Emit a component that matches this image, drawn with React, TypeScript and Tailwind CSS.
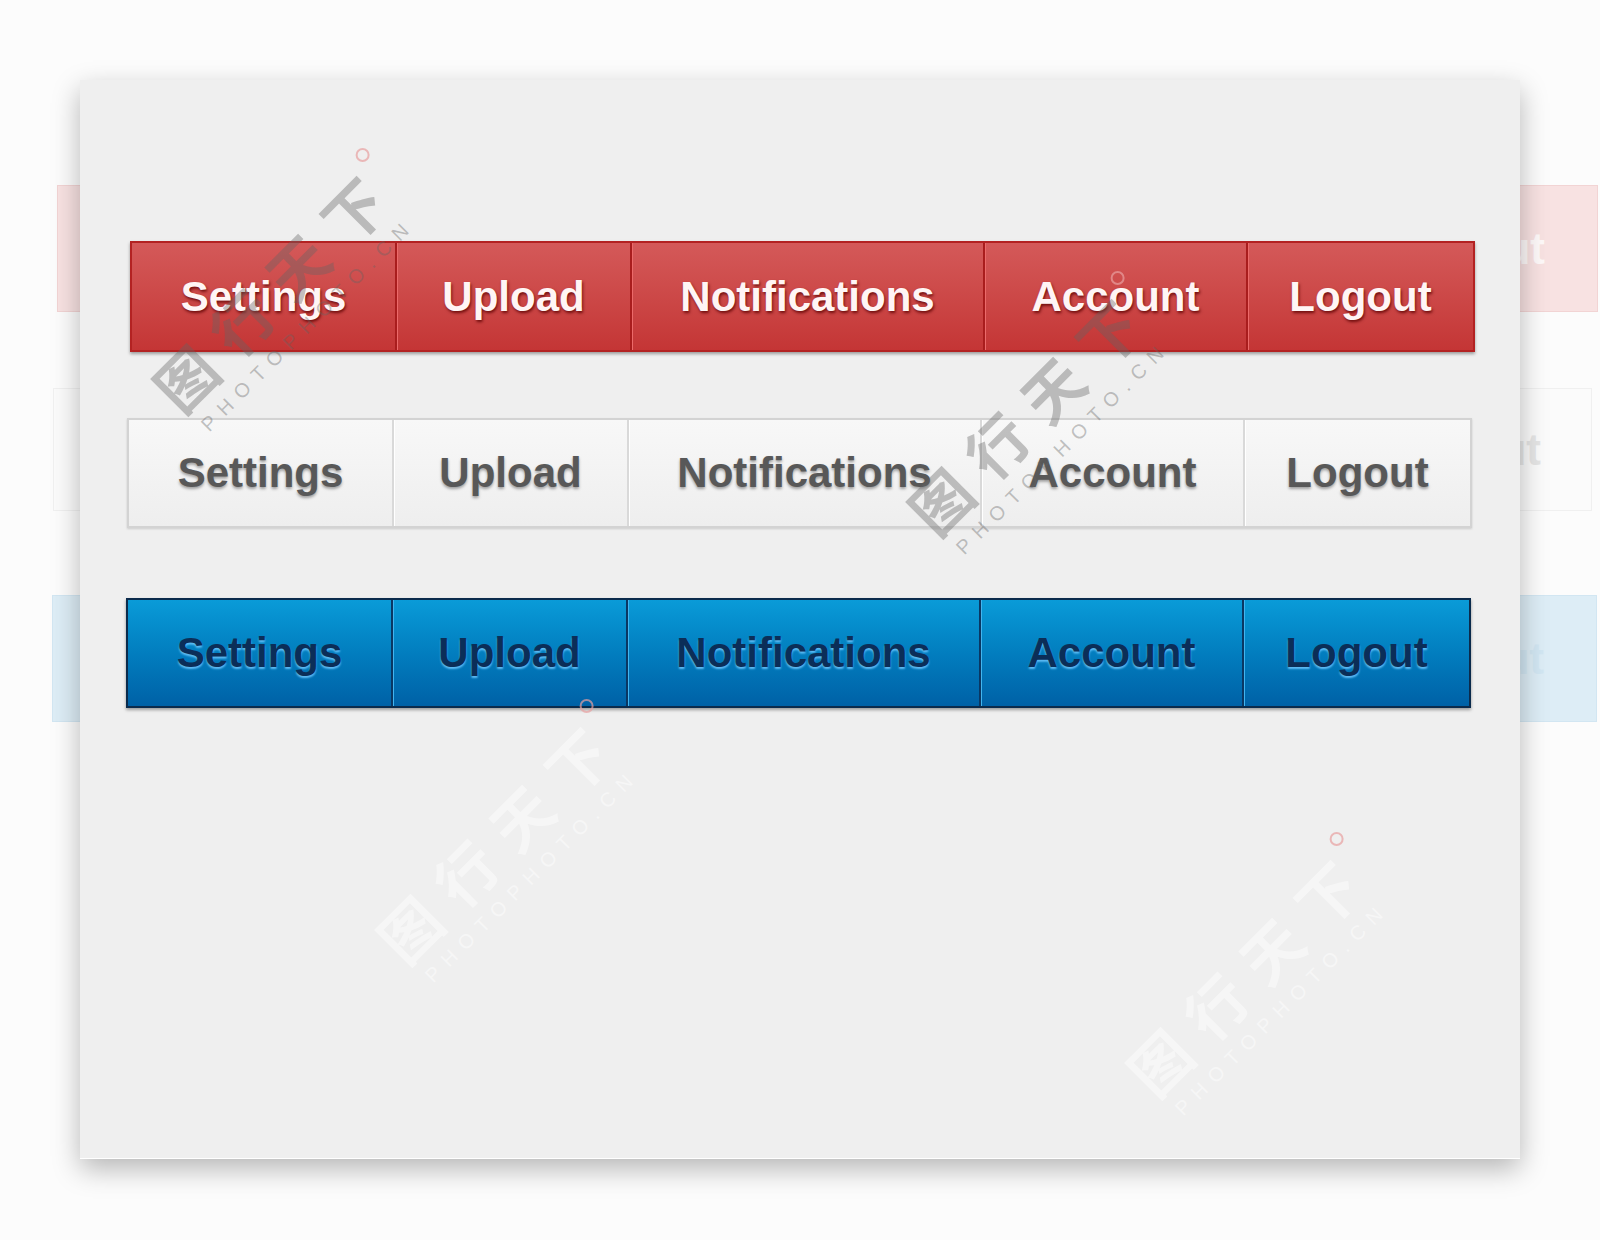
const labels = ["Settings", "Upload", "Notifications", "Account", "Logout"];
const widths = ["w-[263px]", "w-[235px]", "w-[353px]", "w-[263px]", "w-[227px]"];

type Tone = "red" | "white" | "blue";

const styles: Record<Tone, { bar: string; divider: string; text: string }> = {
  red: {
    bar: "h-[111px] ml-[50px] border-2 border-[#b32222] bg-linear-to-b from-[#d45959] to-[#c43535] shadow-[0_2px_3px_rgba(0,0,0,0.35)]",
    divider: "border-l-2 border-[#a91d1d] shadow-[inset_1px_0_0_#ec6a6a]",
    text: "text-[#fff5f5] [text-shadow:1px_2px_3px_rgba(90,0,0,0.8)]",
  },
  white: {
    bar: "h-[110px] ml-[47px] mt-[66px] border-2 border-[#d3d3d3] bg-linear-to-b from-[#f8f8f8] to-[#eeeeee] shadow-[0_1px_2px_rgba(0,0,0,0.15)]",
    divider: "border-l-2 border-[#d9d9d9] shadow-[inset_1px_0_0_#ffffff]",
    text: "text-[#585858] [text-shadow:0_2px_3px_rgba(0,0,0,0.35)]",
  },
  blue: {
    bar: "h-[110px] ml-[46px] mt-[70px] border-2 border-[#0b2b4c] bg-linear-to-b from-[#0a9bd8] to-[#0061a6] shadow-[0_2px_3px_rgba(0,0,0,0.35)]",
    divider: "border-l-2 border-[#0a3763] shadow-[inset_1px_0_0_#42b5ef]",
    text: "text-[#0b2e58] [text-shadow:0_2px_2px_rgba(110,200,255,0.85)]",
  },
};

function NavBar({ tone }: { tone: Tone }) {
  const s = styles[tone];
  return (
    <div className={`flex self-start ${s.bar}`}>
      {labels.map((label, i) => (
        <div
          key={label}
          className={`flex items-center justify-center h-full ${widths[i]} ${i > 0 ? s.divider : ""}`}
        >
          <span className={`text-[42px] font-bold leading-none ${s.text}`}>{label}</span>
        </div>
      ))}
    </div>
  );
}

// faint stock-photo watermark lying over the picture
function Watermark({ pos, tone }: { pos: string; tone: string }) {
  return (
    <div className={`absolute ${pos} origin-top-left -rotate-45 pointer-events-none ${tone}`}>
      <div className="flex items-start">
        <span className="text-[60px] leading-none tracking-[19px] font-['Noto_Sans_CJK_SC',sans-serif] font-bold">
          图行天下
        </span>
        <span className="mt-[-8px] ml-[-10px] w-[14px] h-[14px] rounded-full border-2 border-[#e8a0a0] opacity-70" />
      </div>
      <div className="mt-[10px] ml-[8px] text-[20px] leading-none tracking-[9px] font-light">
        PHOTOPHOTO.CN
      </div>
    </div>
  );
}

export default function App() {
  return (
    <div className="relative w-[1600px] h-[1240px] overflow-hidden bg-[#fcfcfc] pt-[80px] font-['Liberation_Sans',Arial,sans-serif]">
      {/* faded copies behind the panel */}
      <div className="absolute left-[57px] top-[185px] w-[1541px] h-[127px] flex items-center justify-end pr-[52px] bg-[#f8e2e2] border border-[#f2d4d4]">
        <span className="text-[44px] font-bold text-white/80">Logout</span>
      </div>
      <div className="absolute left-[53px] top-[388px] w-[1539px] h-[123px] flex items-center justify-end pr-[50px] bg-[#fbfbfb] border border-[#f0f0f0]">
        <span className="text-[44px] font-bold text-[#e6e6e6]">Logout</span>
      </div>
      <div className="absolute left-[52px] top-[595px] w-[1545px] h-[127px] flex items-center justify-end pr-[52px] bg-[#ddedf6] border border-[#d2e6f2]">
        <span className="text-[44px] font-bold text-[#d2e7f3]">Logout</span>
      </div>

      <div className="relative ml-[80px] w-[1440px] h-[1079px] bg-[#efefef] border-b border-white shadow-[0_10px_26px_rgba(0,0,0,0.28)] flex flex-col pt-[161px]">
        <NavBar tone="red" />
        <NavBar tone="white" />
        <NavBar tone="blue" />
      </div>

      <Watermark pos="left-[142px] top-[377px]" tone="text-[rgba(100,100,100,0.38)]" />
      <Watermark pos="left-[897px] top-[500px]" tone="text-[rgba(100,100,100,0.38)]" />
      <Watermark pos="left-[366px] top-[928px]" tone="text-[rgba(255,255,255,0.45)]" />
      <Watermark pos="left-[1116px] top-[1061px]" tone="text-[rgba(255,255,255,0.45)]" />
    </div>
  );
}
